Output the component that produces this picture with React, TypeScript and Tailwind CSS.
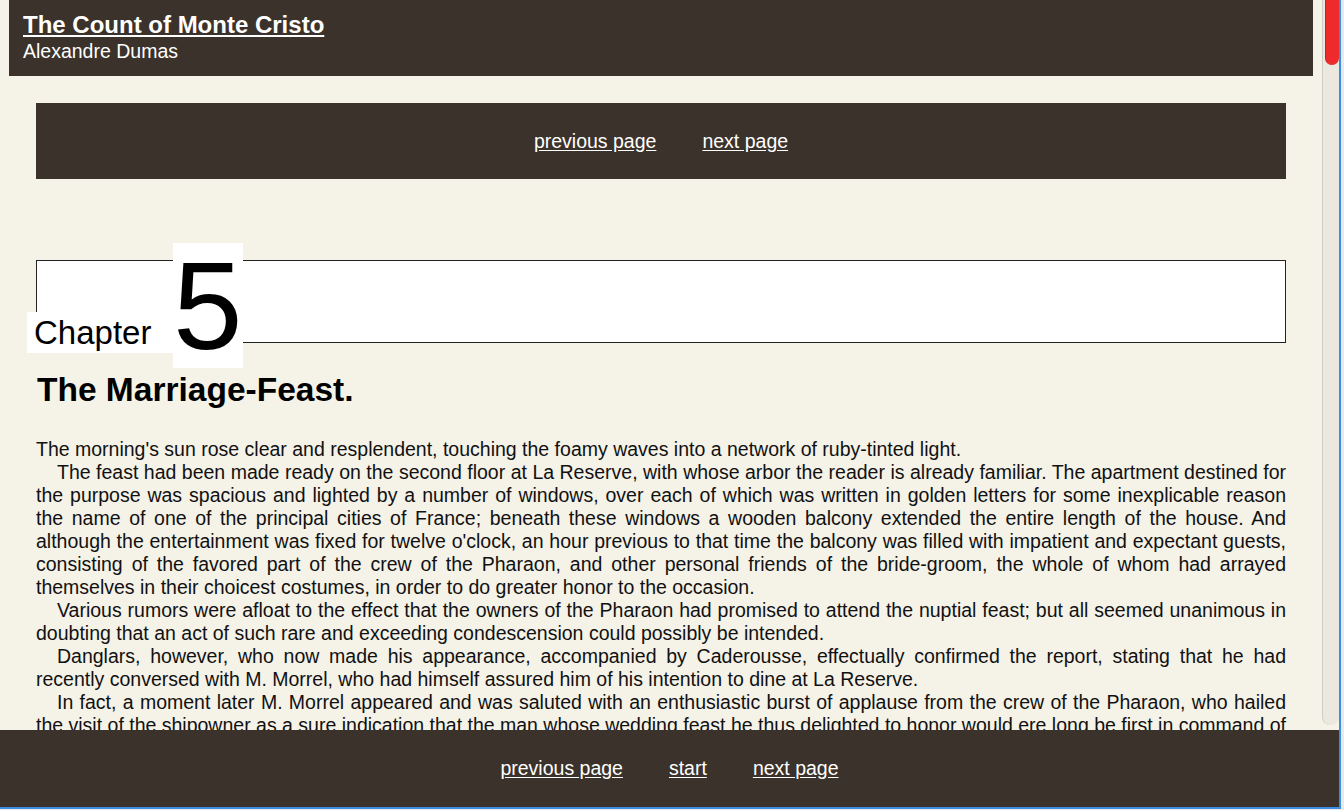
import React from "react";

export default function App() {
  return (
    <div
      className="w-[1344px] h-[810px] bg-[#e9e9e9] overflow-hidden"
      style={{ fontFamily: '"Liberation Sans", Arial, sans-serif' }}
    >
      <div className="relative w-[1341px] h-[809px] border-r-2 border-b-2 border-[#3a8ee4] bg-[#f5f2e8] overflow-hidden flex">
        {/* main scroll area */}
        <div className="w-[1322px] h-full overflow-hidden text-[#111]">
          <header className="mx-[9px] h-[76px] bg-[#3b322c] pl-[14px] pt-[11px] text-white">
            <div className="text-[24px] leading-[28px] font-bold underline underline-offset-[2px] decoration-[1.5px]">
              The Count of Monte Cristo
            </div>
            <div className="text-[19.5px] leading-[24px]">Alexandre Dumas</div>
          </header>

          <div className="mx-[36px] mt-[27px]">
            <nav className="h-[76px] bg-[#3b322c] flex items-center justify-center gap-[46px] text-white text-[19.5px] leading-[23px]">
              <a className="underline underline-offset-[2px]" href="#">previous page</a>
              <a className="underline underline-offset-[2px]" href="#">next page</a>
            </nav>

            <div className="relative mt-[81px] h-[83px] bg-white border border-[#222]">
              <span className="absolute left-[-10px] top-[51px] w-[146px] h-[41px] bg-white pl-[7px] text-[33px] leading-[41px] text-black">
                Chapter
              </span>
              <span className="absolute left-[136px] top-[-18px] w-[70px] h-[125px] bg-white text-[125px] leading-[125px] text-black">
                5
              </span>
            </div>

            <h2 className="mt-[27px] ml-[1px] text-[33.5px] leading-[40px] font-bold text-black">
              The Marriage-Feast.
            </h2>

            <div className="mt-[28px] text-[19.5px] leading-[23px] text-justify">
              <p>
                The morning's sun rose clear and resplendent, touching the foamy waves into a network of ruby-tinted light.
              </p>
              <p className="indent-[21px]">
                The feast had been made ready on the second floor at La Reserve, with whose arbor the reader is already familiar. The apartment destined for{" "}
                <span className="[word-spacing:0.6px]">
                  the purpose was spacious and lighted by a number of windows, over each of which was written in golden letters for some inexplicable reason the
                </span>{" "}
                name of one of the principal cities of France; beneath these windows a wooden balcony extended the entire length of the house. And although the entertainment was fixed for twelve o'clock, an hour previous to that time the balcony was filled with impatient and expectant guests, consisting of the favored part of the crew of the Pharaon, and other personal friends of the bride-groom, the whole of whom had arrayed themselves in their choicest costumes, in order to do greater honor to the occasion.
              </p>
              <p className="indent-[21px]">
                Various rumors were afloat to the effect that the owners of the Pharaon had promised to attend the nuptial feast; but all seemed unanimous in doubting that an act of such rare and exceeding condescension could possibly be intended.
              </p>
              <p className="indent-[21px]">
                <span className="[word-spacing:0.4px]">
                  Danglars, however, who now made his appearance, accompanied by Caderousse, effectually confirmed the report, stating that he had recently
                </span>{" "}
                conversed with M. Morrel, who had himself assured him of his intention to dine at La Reserve.
              </p>
              <p className="indent-[21px]">
                In fact, a moment later M. Morrel appeared and was saluted with an enthusiastic burst of applause from the crew of the Pharaon, who hailed the visit of the shipowner as a sure indication that the man whose wedding feast he thus delighted to honor would ere long be first in command of the ship; and as Dantès was universally beloved on board his vessel, the sailors put no restraint on their tumultuous joy at finding the opinion and choice of their superiors so exactly coincide with their own.
              </p>
              <p className="indent-[21px]">
                With the entrance of M. Morrel, Danglars and Caderousse took their departure in search of the bridegroom, to convey to him the intelligence of the arrival of the important personage whose coming had created such a lively sensation, and to beseech him to make haste.
              </p>
            </div>
          </div>
        </div>

        {/* scrollbar */}
        <div className="w-[17px] h-full">
          <div className="w-[17px] h-[725px] rounded-b-[8px] bg-[#ebe8df] border-l border-[#cfccc4] pl-[2px]">
            <div className="w-[14px] h-[65px] rounded-b-[7px] bg-[#ee2a2a] border-l border-[#c81e1e]" />
          </div>
        </div>

        {/* fixed footer */}
        <footer className="absolute left-0 right-0 bottom-0 h-[77px] bg-[#3b322c] flex items-center justify-center gap-[46px] text-white text-[19.5px] leading-[23px]">
          <a className="underline underline-offset-[2px]" href="#">previous page</a>
          <a className="underline underline-offset-[2px]" href="#">start</a>
          <a className="underline underline-offset-[2px]" href="#">next page</a>
        </footer>
      </div>
    </div>
  );
}
